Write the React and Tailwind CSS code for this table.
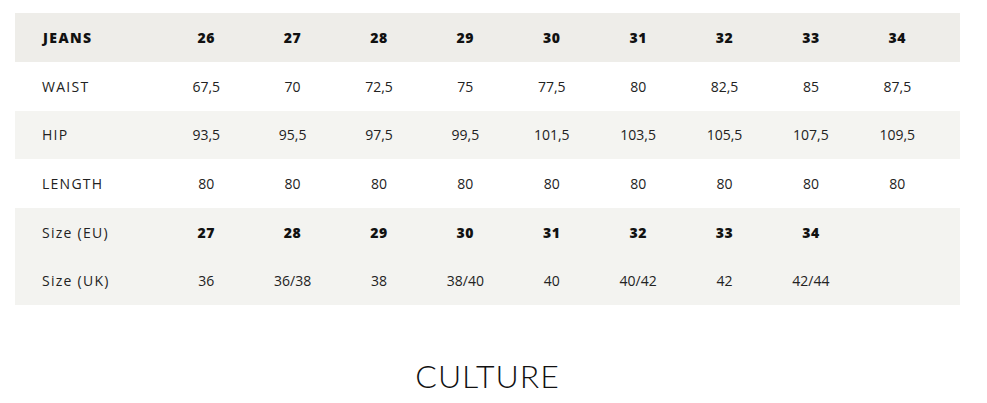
const sizes = ['26', '27', '28', '29', '30', '31', '32', '33', '34']

const rows = [
  { label: 'WAIST', values: ['67,5', '70', '72,5', '75', '77,5', '80', '82,5', '85', '87,5'], bg: 'bg-white' },
  { label: 'HIP', values: ['93,5', '95,5', '97,5', '99,5', '101,5', '103,5', '105,5', '107,5', '109,5'], bg: 'bg-[#f4f4f1]' },
  { label: 'LENGTH', values: ['80', '80', '80', '80', '80', '80', '80', '80', '80'], bg: 'bg-white' },
  { label: 'Size (EU)', values: ['27', '28', '29', '30', '31', '32', '33', '34', ''], bg: 'bg-[#f3f3f0]', bold: true },
  { label: 'Size (UK)', values: ['36', '36/38', '38', '38/40', '40', '40/42', '42', '42/44', ''], bg: 'bg-[#f3f3f0]' },
]

export default function App() {
  return (
    <div className="w-[987px] h-[403px] bg-white text-[#1a1a1a] font-['Open_Sans',sans-serif] overflow-hidden">
      <div className="ml-[15px] mt-[13px] w-[945px]">
        {/* Header */}
        <div className="grid grid-cols-[148px_repeat(9,86.4px)] h-[49px] items-center bg-[#eeede9] text-[14px] font-extrabold text-[#111]">
          <div className="pl-[28px] tracking-[0.1em]">JEANS</div>
          {sizes.map((s) => (
            <div key={s} className="text-center tracking-[0.04em]">{s}</div>
          ))}
        </div>

        {rows.map((row) => (
          <div
            key={row.label}
            className={`grid grid-cols-[148px_repeat(9,86.4px)] h-[48.6px] items-center text-[14px] ${row.bg}`}
          >
            <div className="pl-[27px] text-[#222] tracking-[0.09em]">{row.label}</div>
            {row.values.map((v, i) => (
              <div key={i} className={`text-center ${row.bold ? 'font-extrabold text-[#111] tracking-[0.04em]' : 'text-[#222]'}`}>
                {v}
              </div>
            ))}
          </div>
        ))}

        <div className="flex justify-center mt-[55px]">
          <span className="text-[32px] font-light leading-none tracking-[0.03em] text-[#111] font-['Lato',sans-serif]">
            CULTURE
          </span>
        </div>
      </div>
    </div>
  )
}
